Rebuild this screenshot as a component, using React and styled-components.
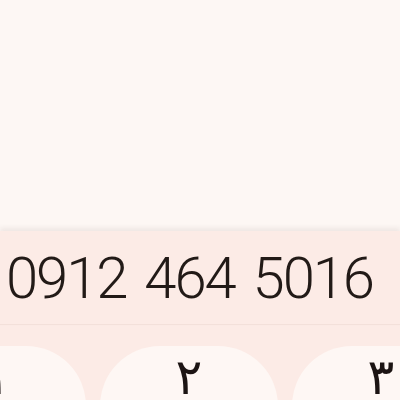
import React from "react";
import styled, { createGlobalStyle } from "styled-components";

const Global = createGlobalStyle`
  html, body {
    margin: 0;
    padding: 0;
    background: #fdf7f4;
  }
  #root {
    width: 400px;
    height: 400px;
    overflow: hidden;
  }
`;

const Screen = styled.div`
  width: 400px;
  height: 400px;
  display: flex;
  flex-direction: column;
  overflow: hidden;
  background: #fcebe6;
`;

const Top = styled.div`
  height: 231px;
  flex-shrink: 0;
  background: #fdf7f4;
`;

const Display = styled.div`
  height: 93px;
  flex-shrink: 0;
  display: flex;
  align-items: center;
  padding-left: 6px;
  background: #fcebe6;
  box-shadow: 0 -3px 5px rgba(60, 40, 35, 0.08);
  border-bottom: 1px solid #f3e0da;
  position: relative;
`;

const Number = styled.div`
  font-family: Roboto, "Noto Sans", sans-serif;
  font-size: 58px;
  font-weight: 300;
  color: #221a17;
  letter-spacing: -2.1px;
  word-spacing: 6px;
  white-space: nowrap;
`;

const Keypad = styled.div`
  flex: 1;
  padding-top: 21px;
  display: flex;
  gap: 14px;
  margin-left: -92px;
  width: 562px;
`;

const Key = styled.div`
  width: 178px;
  height: 120px;
  flex-shrink: 0;
  border-radius: 60px;
  background: #fef7f4;
  display: flex;
  justify-content: center;
  padding-top: 2px;
  box-sizing: border-box;
  font-family: "DejaVu Sans", sans-serif;
  font-size: 50px;
  font-weight: 400;
  color: #1c1413;
`;

export default function App() {
  return (
    <>
      <Global />
      <Screen>
        <Top />
        <Display>
          <Number>0912 464 5016</Number>
        </Display>
        <Keypad>
          <Key>۱</Key>
          <Key>۲</Key>
          <Key>۳</Key>
        </Keypad>
      </Screen>
    </>
  );
}
